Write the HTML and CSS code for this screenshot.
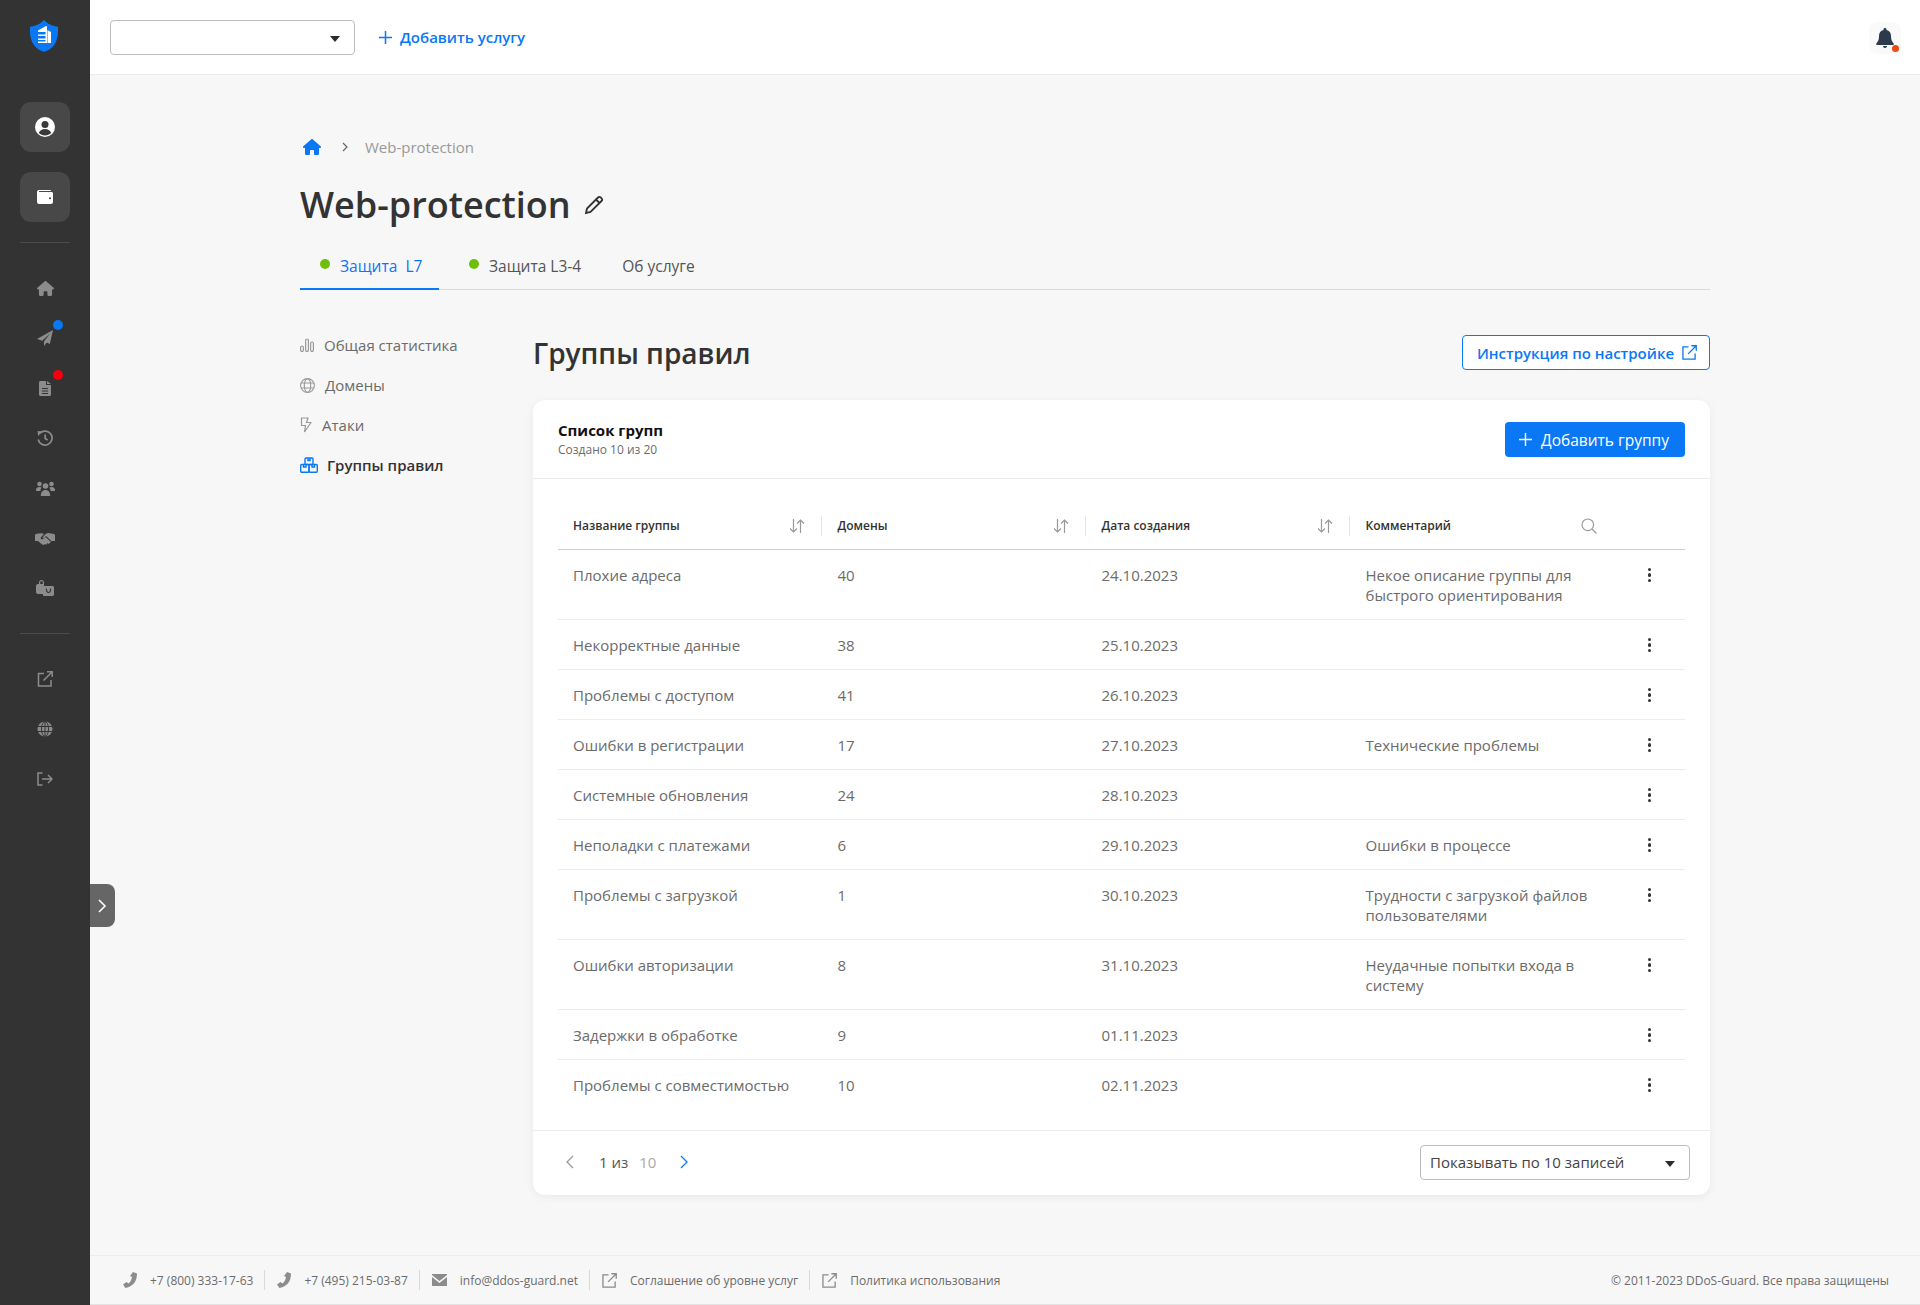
FILE: index.html
```html
<!DOCTYPE html>
<html lang="ru">
<head>
<meta charset="utf-8">
<title>Web-protection</title>
<link rel="stylesheet" href="styles.css">
</head>
<body>
<div class="app">
  <aside class="sidebar">
    <div class="logo">
      <svg width="28" height="32" viewBox="0 0 28 32"><path fill="#0a78f5" d="M14 0l4 3.500c2.600 1.500 6 2.600 10 3.200 .3 5.400 -.2 10.500 -2 15C24 26.500 20 30 14 32 8 30 4 26.500 2 21.700 .2 17.200 -.3 12.100 0 6.700c4-.6 7.400-1.700 10-3.200z"/><path fill="#fff" d="M8 10.500l8-4.500 1 .5v16.500H8v-1.500h7.500V20H8v-1.500h7.500V16H8v-1.500h7.500V12H8zM17.500 10l3.500 2v11h-3.500z"/></svg>
    </div>
    <div class="side-top">
      <div class="side-btn">
        <svg width="20" height="20" viewBox="0 0 20 20"><circle cx="10" cy="10" r="10" fill="#fff"/><circle cx="10" cy="7.500" r="3.500" fill="#3a3a3a"/><path fill="#3a3a3a" d="M3.800 16c1-2.700 3.400-4 6.200-4s5.200 1.300 6.200 4c-1.600 1.500-3.800 2.400-6.200 2.400S5.400 17.500 3.800 16z"/></svg>
      </div>
      <div class="side-btn">
        <svg width="16" height="14" viewBox="0 0 16 14"><path fill="#fff" d="M2 0h11c.8 0 1 .5 1 1H2.200C1.800 1 1.800 2 2.200 2H14.500c.8 0 1.500 .7 1.500 1.500V12c0 1.100-.9 2-2 2H2c-1.100 0-2-.9-2-2V2C0 .9 .9 0 2 0z"/><circle cx="13" cy="8.300" r="1" fill="#3a3a3a"/></svg>
      </div>
    </div>
    <div class="side-sep"></div>
    <nav class="side-icons">
      <div class="side-ico"><svg width="17" height="15" viewBox="0 0 576 512"><path d="M575.800 255.500c0 18-15 32.100-32 32.100h-32l.7 160.200c0 2.700-.2 5.400-.5 8.100V472c0 22.100-17.900 40-40 40H392c-22.100 0-40-17.900-40-40V384c0-17.700-14.300-32-32-32H256c-17.700 0-32 14.300-32 32v88c0 22.100-17.900 40-40 40H104c-22.100 0-40-17.900-40-40V287.600H32c-18 0-32-14-32-32.100 0-9 3-17 10-24L266.400 8c7-7 15-8 22-8s15 2 21 7L564.800 231.500c8 7 12 15 11 24z"/></svg></div>
      <div class="side-ico"><svg width="16" height="16" viewBox="0 0 16 16"><path d="M16 0L0 9l5.200 1.800L13 3.500 7 11.500v4.500l2.800-3.400 3 1.300z"/></svg><span class="badge badge-blue"></span></div>
      <div class="side-ico"><svg width="12" height="15" viewBox="0 0 12 15"><path fill-rule="evenodd" d="M1.500 0H7v4h5v9.500c0 .8-.7 1.500-1.500 1.500h-9C.7 15 0 14.300 0 13.500v-12C0 .7 .7 0 1.500 0zM8 0l4 3H8zM3 7v1h6V7zM3 9.500v1h6v-1zM3 12v1h6v-1z"/></svg><span class="badge badge-red"></span></div>
      <div class="side-ico"><svg width="16" height="16" viewBox="0 0 16 16" fill="none" stroke="#8c8c8c" stroke-width="1.700"><path d="M3 3.200A7 7 0 1 1 1.200 9.500"/><path d="M8.200 4.500v4l2.500 1.600"/><path fill="#8c8c8c" stroke="none" d="M.6 1l5 .4L1 6z"/></svg></div>
      <div class="side-ico"><svg width="19" height="15" viewBox="0 0 19 15"><circle cx="3.500" cy="3" r="2.300"/><circle cx="15.500" cy="3" r="2.300"/><circle cx="9.500" cy="5" r="2.800"/><path d="M0 9c0-2 1.300-3 3.500-3 1 0 1.700 .2 2.200 .6C5 7.500 4.500 8.500 4.400 10H0zM19 9c0-2-1.300-3-3.500-3-1 0-1.700 .2-2.200 .6 .7 .9 1.200 1.900 1.300 3.400H19zM4.800 15c0-3.500 1.600-6 4.700-6s4.700 2.500 4.700 6z"/></svg></div>
      <div class="side-ico"><svg width="20" height="13" viewBox="0 0 20 13"><path d="M0 2.500L3 1.500 7 1.200 9 2 5.800 5.500c-.5 1 .7 2.300 2 1.600L10.500 5l5.500 5-2.500 2-1-1-1 1.500-1.800-.3L8 13 6.500 12 3 9H0zM20 2.500v6.500h-2.500l-.8 .3L11 4 9.500 5.500 8 6 7.500 5.500 10.500 2l2.500-1 3.500 .5z"/></svg></div>
      <div class="side-ico"><svg width="18" height="16" viewBox="0 0 18 16"><path fill-rule="evenodd" d="M5.500 0C7 0 8 1 8 2.500V4h-1.200V2.500c0-.8-.5-1.300-1.300-1.300S4.200 1.700 4.200 2.500V4H8v2H7v8H2c-1.100 0-2-.9-2-2V6c0-1.100 .9-2 2-2h1V2.500C3 1 4 0 5.500 0z"/><path fill-rule="evenodd" d="M8 6h8.500c.8 0 1.500 .7 1.500 1.500v7c0 .8-.7 1.500-1.500 1.500H8c-.6 0-1-.4-1-1V7c0-.6 .4-1 1-1zM9.800 8.500c0 3 1 4.500 2.700 4.500s2.700-1.500 2.700-4.500h-1.100c0 2.200-.6 3.400-1.600 3.400s-1.600-1.200-1.600-3.400z"/></svg></div>
    </nav>
    <div class="side-sep"></div>
    <nav class="side-icons">
      <div class="side-ico"><svg width="16" height="16" viewBox="0 0 16 16" fill="none" stroke="#8c8c8c" stroke-width="1.500"><path d="M7 2.500H1.500v12.500H14V9"/><path d="M6.500 9.500L15 1M10 .8h5.200V6"/></svg></div>
      <div class="side-ico"><svg width="16" height="16" viewBox="0 0 16 16" fill="none" stroke="#8c8c8c"><circle cx="8" cy="8" r="7.500" fill="#8c8c8c" stroke="none"/><path stroke="#333" d="M.5 5.500h15M.5 10.500h15M8 .5v15"/><ellipse cx="8" cy="8" rx="3.500" ry="7.500" stroke="#333"/></svg></div>
      <div class="side-ico"><svg width="16" height="14" viewBox="0 0 16 14" fill="none" stroke="#8c8c8c" stroke-width="1.500"><path d="M5.500 1H1v12h4.500"/><path d="M5 7h10M11 3l4 4-4 4"/></svg></div>
    </nav>
    <button class="collapse" aria-label="Развернуть"><svg width="9" height="14" viewBox="0 0 9 14" fill="none" stroke="#fff" stroke-width="1.600"><path d="M1 1l6 6-6 6"/></svg></button>
  </aside>

  <div class="page">
    <header class="topbar">
      <div class="select select-top"><span class="caret"></span></div>
      <a class="add-service"><svg width="13" height="13" viewBox="0 0 13 13" stroke="#0a78f5" stroke-width="1.500"><path d="M6.500 0v13M0 6.500h13"/></svg>Добавить услугу</a>
      <div class="bell">
        <svg width="18" height="20" viewBox="0 0 18 20"><path fill="#2c3a4b" d="M9 0c.9 0 1.500 .6 1.500 1.400v.7C13.300 2.800 15 5 15 8c0 3.600 .8 5.300 2.500 7.200 .6 .7 .2 1.800-.8 1.800H1.300c-1 0-1.400-1.100-.8-1.800C2.200 13.300 3 11.600 3 8c0-3 1.700-5.200 4.500-5.900v-.7C7.500 .6 8.100 0 9 0zM7 18h4c0 1.100-.9 2-2 2s-2-.9-2-2z"/></svg>
        <span class="bell-dot"></span>
      </div>
    </header>

    <main class="main">
      <div class="crumbs">
        <svg class="crumb-home" width="18" height="16" viewBox="0 0 576 512"><path d="M575.800 255.500c0 18-15 32.100-32 32.100h-32l.7 160.200c0 2.700-.2 5.400-.5 8.100V472c0 22.100-17.900 40-40 40H392c-22.100 0-40-17.900-40-40V384c0-17.700-14.300-32-32-32H256c-17.700 0-32 14.300-32 32v88c0 22.100-17.900 40-40 40H104c-22.100 0-40-17.900-40-40V287.600H32c-18 0-32-14-32-32.100 0-9 3-17 10-24L266.400 8c7-7 15-8 22-8s15 2 21 7L564.800 231.500c8 7 12 15 11 24z"/></svg>
        <svg class="crumb-sep" width="6" height="10" viewBox="0 0 6 10" fill="none" stroke="#666" stroke-width="1.200"><path d="M1 1l4 4-4 4"/></svg>
        <span>Web-protection</span>
      </div>
      <div class="title-row">
        <h1>Web-protection</h1>
        <svg width="20" height="20" viewBox="0 0 20 20" fill="none" stroke="#333" stroke-width="1.800"><path d="M2 18l1-4.500L14 2.500c.8-.8 2-.8 2.700 0l.8 .8c.8 .8 .8 1.900 0 2.700L6.500 17z"/><path d="M12 4.500l3.500 3.500"/></svg>
      </div>
      <div class="tabs">
        <a class="tab tab-active"><span class="dot"></span>Защита&nbsp; L7</a>
        <a class="tab tab-second"><span class="dot"></span>Защита L3-4</a>
        <a class="tab tab-third">Об услуге</a>
      </div>

      <div class="columns">
        <nav class="subnav">
          <a class="sub-item"><svg width="14" height="14" viewBox="0 0 14 14" fill="none" stroke="#999" stroke-width="1.200"><rect x=".6" y="8" width="2.800" height="5.500" rx="1.400"/><rect x="5.600" y="1" width="2.800" height="12.500" rx="1.400"/><rect x="10.600" y="4" width="2.800" height="9.500" rx="1.400"/></svg>Общая статистика</a>
          <a class="sub-item"><svg width="15" height="15" viewBox="0 0 15 15" fill="none" stroke="#999" stroke-width="1.100"><circle cx="7.500" cy="7.500" r="6.900"/><ellipse cx="7.500" cy="7.500" rx="3.200" ry="6.900"/><path d="M1 5h13M1 10h13"/></svg>Домены</a>
          <a class="sub-item"><svg width="12" height="16" viewBox="0 0 12 16" fill="none" stroke="#999" stroke-width="1.200"><path d="M1.500 1H8L6.500 5.500H11L4.500 15l1-6.500H1.500z"/></svg>Атаки</a>
          <a class="sub-item sub-active"><svg width="18" height="16" viewBox="0 0 18 16" fill="none" stroke="#0a78f5" stroke-width="1.400"><rect x="5" y="1" width="8" height="6.500" rx="1"/><rect x=".7" y="7.500" width="8.300" height="7.800" rx="1"/><rect x="9" y="7.500" width="8.300" height="7.800" rx="1"/><path d="M8 1v2.500h2V1M3.500 7.500V10h2.500V7.500M12 7.500V10h2.500V7.500"/></svg>Группы правил</a>
        </nav>

        <section class="content">
          <div class="content-head">
            <h2>Группы правил</h2>
            <a class="btn-outline">Инструкция по настройке<svg width="15" height="15" viewBox="0 0 16 16" fill="none" stroke="#0a78f5" stroke-width="1.400"><path d="M7 2H1v13h13V9"/><path d="M6.500 9.500L15 1M10 .8h5.200V6"/></svg></a>
          </div>

          <div class="card">
            <div class="card-head">
              <div class="card-text">
                <div class="card-title">Список групп</div>
                <div class="card-sub">Создано 10 из 20</div>
              </div>
              <a class="btn-primary"><svg width="13" height="13" viewBox="0 0 13 13" stroke="#fff" stroke-width="1.400"><path d="M6.500 0v13M0 6.500h13"/></svg>Добавить группу</a>
            </div>
            <div class="card-body">
              <table class="grid">
                <colgroup><col class="c1"><col class="c1"><col class="c1"><col class="c4"><col></colgroup>
                <thead>
                  <tr>
                    <th><div class="th-in th-line">Название группы<svg class="sort" width="16" height="14" viewBox="0 0 16 14" fill="none" stroke="#999" stroke-width="1.200"><path d="M4.500 0v13M1 9.500L4.500 13 8 9.500M11.500 14V1M8 4.500L11.500 1 15 4.500"/></svg></div></th>
                    <th><div class="th-in th-line">Домены<svg class="sort" width="16" height="14" viewBox="0 0 16 14" fill="none" stroke="#999" stroke-width="1.200"><path d="M4.500 0v13M1 9.500L4.500 13 8 9.500M11.500 14V1M8 4.500L11.500 1 15 4.500"/></svg></div></th>
                    <th><div class="th-in th-line">Дата создания<svg class="sort" width="16" height="14" viewBox="0 0 16 14" fill="none" stroke="#999" stroke-width="1.200"><path d="M4.500 0v13M1 9.500L4.500 13 8 9.500M11.500 14V1M8 4.500L11.500 1 15 4.500"/></svg></div></th>
                    <th><div class="th-in">Комментарий<svg width="16" height="16" viewBox="0 0 16 16" fill="none" stroke="#999" stroke-width="1.200"><circle cx="6.800" cy="6.800" r="5.800"/><path d="M11 11l4.500 4.500"/></svg></div></th>
                    <th></th>
                  </tr>
                </thead>
                <tbody>
                  <tr><td>Плохие адреса</td><td>40</td><td>24.10.2023</td><td>Некое описание группы для быстрого ориентирования</td><td class="more"><div class="kebab"><i></i><i></i><i></i></div></td></tr>
                  <tr><td>Некорректные данные</td><td>38</td><td>25.10.2023</td><td></td><td class="more"><div class="kebab"><i></i><i></i><i></i></div></td></tr>
                  <tr><td>Проблемы с доступом</td><td>41</td><td>26.10.2023</td><td></td><td class="more"><div class="kebab"><i></i><i></i><i></i></div></td></tr>
                  <tr><td>Ошибки в регистрации</td><td>17</td><td>27.10.2023</td><td>Технические проблемы</td><td class="more"><div class="kebab"><i></i><i></i><i></i></div></td></tr>
                  <tr><td>Системные обновления</td><td>24</td><td>28.10.2023</td><td></td><td class="more"><div class="kebab"><i></i><i></i><i></i></div></td></tr>
                  <tr><td>Неполадки с платежами</td><td>6</td><td>29.10.2023</td><td>Ошибки в процессе</td><td class="more"><div class="kebab"><i></i><i></i><i></i></div></td></tr>
                  <tr><td>Проблемы с загрузкой</td><td>1</td><td>30.10.2023</td><td>Трудности с загрузкой файлов пользователями</td><td class="more"><div class="kebab"><i></i><i></i><i></i></div></td></tr>
                  <tr><td>Ошибки авторизации</td><td>8</td><td>31.10.2023</td><td>Неудачные попытки входа в систему</td><td class="more"><div class="kebab"><i></i><i></i><i></i></div></td></tr>
                  <tr><td>Задержки в обработке</td><td>9</td><td>01.11.2023</td><td></td><td class="more"><div class="kebab"><i></i><i></i><i></i></div></td></tr>
                  <tr><td>Проблемы с совместимостью</td><td>10</td><td>02.11.2023</td><td></td><td class="more"><div class="kebab"><i></i><i></i><i></i></div></td></tr>
                </tbody>
              </table>
            </div>
            <div class="card-foot">
              <div class="pager">
                <svg width="9" height="14" viewBox="0 0 9 14" fill="none" stroke="#999" stroke-width="1.300"><path d="M8 1L2 7l6 6"/></svg>
                <span class="pager-cur">1 из</span>
                <span class="pager-total">10</span>
                <svg class="pager-next" width="9" height="14" viewBox="0 0 9 14" fill="none" stroke="#0a78f5" stroke-width="1.300"><path d="M1 1l6 6-6 6"/></svg>
              </div>
              <div class="select select-size">Показывать по 10 записей<span class="caret"></span></div>
            </div>
          </div>
        </section>
      </div>
    </main>

    <footer class="footer">
      <div class="foot-links">
        <div class="foot-item"><svg width="14" height="16" viewBox="0 0 14 16"><path d="M10 0l4 1.500c0 8-4 13-11.500 14.500L0 12.500l3.500-2.500 2 1.500c2-1.500 3-3.500 3.500-6.500L7 4z"/></svg>+7 (800) 333-17-63</div>
        <div class="foot-item"><svg width="14" height="16" viewBox="0 0 14 16"><path d="M10 0l4 1.500c0 8-4 13-11.500 14.500L0 12.500l3.500-2.500 2 1.500c2-1.500 3-3.500 3.500-6.500L7 4z"/></svg>+7 (495) 215-03-87</div>
        <div class="foot-item"><svg width="15" height="12" viewBox="0 0 15 12"><path d="M0 0h15v1L7.500 7 0 1zM0 3l7.500 6L15 3v9H0z"/></svg>info@ddos-guard.net</div>
        <div class="foot-item"><svg width="15" height="15" viewBox="0 0 16 16" fill="none" stroke="#8c8c8c" stroke-width="1.400"><path d="M7 2H1v13h13V9"/><path d="M6.500 9.500L15 1M10 .8h5.200V6"/></svg>Соглашение об уровне услуг</div>
        <div class="foot-item"><svg width="15" height="15" viewBox="0 0 16 16" fill="none" stroke="#8c8c8c" stroke-width="1.400"><path d="M7 2H1v13h13V9"/><path d="M6.500 9.500L15 1M10 .8h5.200V6"/></svg>Политика использования</div>
      </div>
      <div class="copy">© 2011-2023 DDoS-Guard. Все права защищены</div>
    </footer>
  </div>
</div>
</body>
</html>
```
FILE: styles.css
```css
* { box-sizing: border-box; }
html, body { margin: 0; padding: 0; }
body { font-family: "Open Sans", "Noto Sans", sans-serif; color: #333; background: #f7f7f7; }
a { text-decoration: none; color: inherit; }
h1, h2 { margin: 0; }

.app { display: flex; min-height: 100vh; }

/* sidebar */
.sidebar { position: relative; flex: 0 0 90px; width: 90px; background: #333; display: flex; flex-direction: column; align-items: center; }
.logo { height: 102px; padding-top: 20px; margin-left: -2px; display: flex; justify-content: center; align-items: flex-start; }
.side-top { display: flex; flex-direction: column; gap: 20px; }
.side-btn { width: 50px; height: 50px; border-radius: 11px; background: #484848; display: flex; align-items: center; justify-content: center; }
.side-sep { width: 50px; height: 1px; background: #4b4b4b; margin: 20px 0; }
.side-icons { display: flex; flex-direction: column; }
.side-ico { position: relative; width: 50px; height: 50px; display: flex; align-items: center; justify-content: center; fill: #8c8c8c; }
.badge { position: absolute; width: 10px; height: 10px; border-radius: 50%; top: 7px; left: 33px; }
.badge-blue { background: #0a78f5; }
.badge-red { background: #f5000f; }
.collapse { position: absolute; left: 90px; top: 884px; width: 25px; height: 43px; padding: 0; border: 0; border-radius: 0 8px 8px 0; background: #666; display: flex; align-items: center; justify-content: center; }

/* page */
.page { flex: 1; min-width: 0; display: flex; flex-direction: column; }
.topbar { height: 75px; flex: none; background: #fff; border-bottom: 1px solid #ececec; display: flex; align-items: center; padding: 0 19px 0 20px; }
.select { position: relative; background: #fff; border: 1px solid #bdbdbd; border-radius: 4px; height: 35px; display: flex; align-items: center; font-size: 15px; color: #333; }
.select-top { width: 245px; margin-top: 1px; }
.caret { position: absolute; right: 14px; top: 15px; width: 0; height: 0; border-left: 5.500px solid transparent; border-right: 5.500px solid transparent; border-top: 6px solid #2c2c2c; }
.add-service { margin-left: 24px; display: flex; align-items: center; gap: 8px; color: #0a78f5; font-size: 15px; font-weight: 600; }
.bell { position: relative; margin-left: auto; width: 32px; height: 32px; border-radius: 8px; background: #fafafa; margin-top: 2px; display: flex; align-items: center; justify-content: center; }
.bell-dot { position: absolute; width: 7px; height: 7px; border-radius: 50%; background: #f04a14; right: 2px; bottom: 2px; }

/* main */
.main { flex: 1; padding: 62px 210px 0; }
.crumbs { height: 20px; display: flex; align-items: center; font-size: 15px; color: #999; }
.crumb-home { fill: #0a78f5; margin-left: 3px; }
.crumb-sep { margin: 0 17px 0 21px; }
.title-row { margin-top: 24px; height: 48px; display: flex; align-items: center; gap: 13px; }
h1 { font-size: 36px; line-height: 48px; font-weight: 600; color: #333; }
.tabs { margin-top: 11px; height: 50px; display: flex; border-bottom: 1px solid #d9d9d9; }
.tab { height: 50px; display: flex; align-items: center; font-size: 15.500px; font-weight: 500; color: #555; padding-top: 1px; }
.tab-active { width: 139px; padding: 3px 0 0 20px; color: #0a78f5; border-bottom: 2px solid #0a78f5; }
.tab-second { margin-left: 30px; }
.tab-third { margin-left: 41px; }
.dot { width: 10px; height: 10px; border-radius: 50%; background: #6ebe0a; margin-right: 10px; margin-top: -3px; }

.columns { display: flex; padding-top: 35px; }
.subnav { flex: 0 0 233px; display: flex; flex-direction: column; }
.sub-item { height: 40px; display: flex; align-items: center; gap: 10px; font-size: 15px; color: #6b6b6b; }
.sub-active { color: #333; font-weight: 600; gap: 9px; }
.content { flex: 1; min-width: 0; padding-top: 10px; }
.content-head { height: 35px; display: flex; justify-content: space-between; align-items: center; }
h2 { font-size: 28px; line-height: 36px; font-weight: 600; color: #333; }
.btn-outline { height: 35px; width: 248px; display: flex; align-items: center; justify-content: space-between; padding: 0 12px 0 14px; border: 1px solid #0a78f5; border-radius: 4px; background: #fff; color: #0a78f5; font-size: 15px; font-weight: 600; }

.card { margin-top: 30px; background: #fff; border-radius: 12px; box-shadow: 0 2px 10px rgba(0, 0, 0, .06); }
.card-head { height: 79px; border-bottom: 1px solid #ececec; padding: 0 25px; display: flex; justify-content: space-between; align-items: center; }
.card-text { padding-top: 2px; }
.card-title { font-size: 15px; line-height: 20px; font-weight: 700; color: #111; }
.card-sub { font-size: 12px; line-height: 20px; color: #6b6b6b; }
.btn-primary { width: 180px; height: 35px; background: #0a78f5; color: #fff; border-radius: 4px; display: flex; align-items: center; justify-content: center; gap: 9px; font-size: 15.500px; font-weight: 500; margin-top: 1px; padding-right: 2px; }

.card-body { padding: 21px 25px 20px; }
.grid { width: 100%; table-layout: fixed; border-collapse: separate; border-spacing: 0; }
.c1 { width: 264px; }
.c4 { width: 263px; }
th { height: 50px; padding: 2px 0 0; border-bottom: 1px solid #cfcfcf; font-weight: 600; font-size: 12px; text-align: left; color: #333; }
.th-in { height: 20px; padding: 0 16px 0 15px; display: flex; align-items: center; justify-content: space-between; }
th + th .th-in { padding-left: 15.500px; }
.th-line { border-right: 1px solid #e5e5e5; }
td { height: 50px; padding: 15px 15px 14px; vertical-align: top; border-bottom: 1px solid #ececec; font-size: 15px; line-height: 20px; color: #6b6b6b; }
td + td { padding-left: 15.500px; }
tbody tr:last-child td { border-bottom: 0; }
td.more { padding: 15px 0 14px 1px; }
.kebab { height: 20px; display: flex; flex-direction: column; align-items: center; justify-content: center; gap: 2px; }
.kebab i { display: block; width: 3.500px; height: 3.500px; border-radius: 50%; background: #333; }

.card-foot { height: 65px; border-top: 1px solid #ececec; padding: 0 20px 2px 25px; display: flex; align-items: center; justify-content: space-between; }
.pager { display: flex; align-items: center; font-size: 15px; padding-left: 7px; }
.pager-cur { margin-left: 25px; color: #555; }
.pager-total { margin-left: 11px; color: #aaa; }
.pager-next { margin-left: 24px; }
.select-size { width: 270px; padding-left: 9px; color: #444; }

/* footer */
.footer { height: 50px; flex: none; border-top: 1px solid #ececec; border-bottom: 1px solid #e3e3e3; background: #f7f7f7; padding: 0 31px 0 33px; display: flex; align-items: center; justify-content: space-between; font-size: 12px; color: #6b6b6b; }
.foot-links { display: flex; align-items: center; }
.foot-item { display: flex; align-items: center; gap: 13px; height: 20px; padding: 0 11px 0 0; margin-right: 12px; border-right: 1px solid #d9d9d9; fill: #8c8c8c; }
.foot-item:last-child { border-right: 0; margin-right: 0; padding-right: 0; }
```
